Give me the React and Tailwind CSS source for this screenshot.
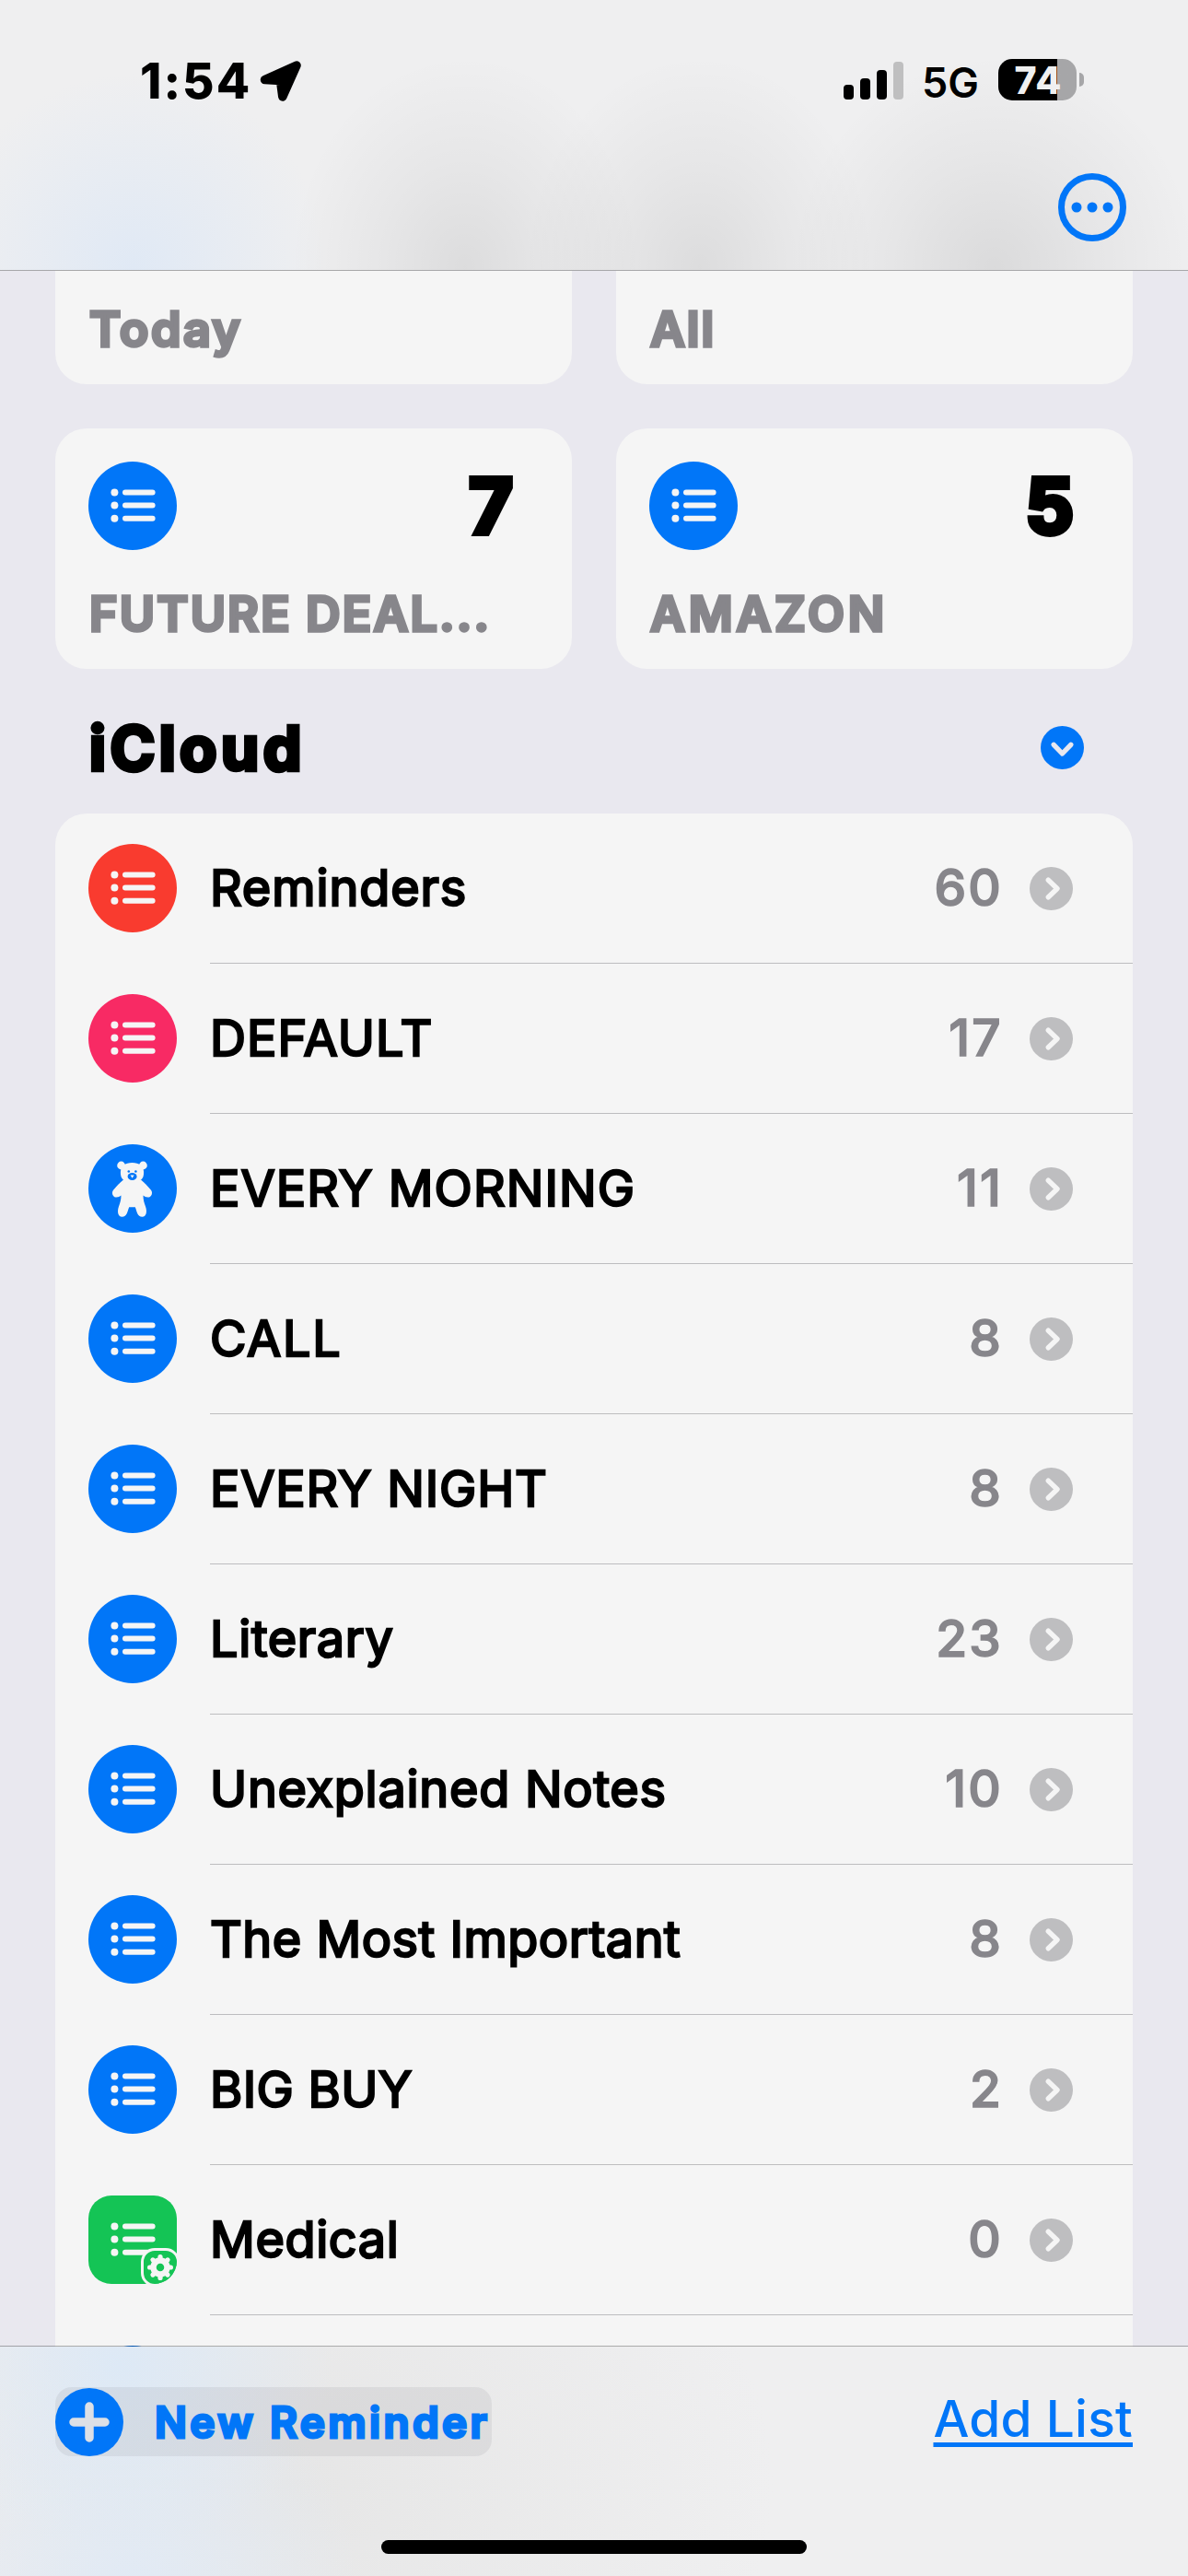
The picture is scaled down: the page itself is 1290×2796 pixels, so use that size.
import React from "react";

const lists = [
  { name: "Reminders", tracking: "tracking-[0.9px]", count: 60, icon: "list", color: "bg-[#f93b2f]" },
  { name: "DEFAULT", tracking: "tracking-[1.05px]", count: 17, icon: "list", color: "bg-[#f82a64]" },
  { name: "EVERY MORNING", tracking: "tracking-[1.05px]", count: 11, icon: "bear", color: "bg-[#0176f8]" },
  { name: "CALL", tracking: "tracking-[1.7px]", count: 8, icon: "list", color: "bg-[#0176f8]" },
  { name: "EVERY NIGHT", tracking: "tracking-[0.8px]", count: 8, icon: "list", color: "bg-[#0176f8]" },
  { name: "Literary", tracking: "tracking-[0.65px]", count: 23, icon: "list", color: "bg-[#0176f8]" },
  { name: "Unexplained Notes", tracking: "tracking-[0.74px]", count: 10, icon: "list", color: "bg-[#0176f8]" },
  { name: "The Most Important", tracking: "tracking-[0.5px]", count: 8, icon: "list", color: "bg-[#0176f8]" },
  { name: "BIG BUY", tracking: "tracking-[0.3px]", count: 2, icon: "list", color: "bg-[#0176f8]" },
  { name: "Medical", tracking: "tracking-[0.6px]", count: 0, icon: "smart", color: "" },
];

const listMarks = [33.5, 47.5, 61.7];

function ListGlyph() {
  return (
    <svg viewBox="0 0 96 96" className="size-24">
      {listMarks.map((y) => (
        <g key={y}>
          <circle cx="28.4" cy={y} r="4" fill="#f5f5f5" />
          <path d={`M40 ${y}H69.6`} stroke="#f5f5f5" strokeWidth="6" strokeLinecap="round" />
        </g>
      ))}
    </svg>
  );
}

function BearGlyph() {
  return (
    <svg viewBox="0 0 96 96" className="size-24">
      <g fill="#f5f5f5">
        <circle cx="35.6" cy="23" r="4.4" />
        <circle cx="59.4" cy="23" r="4.4" />
        <path d="M47.5 20c8 0 12.6 3.6 12.6 10.5c0 5.5-1.9 7.5-4.6 9.2H39.5c-2.7-1.7-4.6-3.7-4.6-9.2C34.9 23.6 39.5 20 47.5 20Z" />
        <path d="M38 38.5H57C61.5 42 64 45.5 67.8 49.5C70.5 52.5 68.5 57.8 64.5 57.6C62.3 57.5 61 56.5 59.5 55.5C59.5 60 60.5 63.5 62 67.5C64 73 63 78.7 58.5 78.7C53 78.7 53 74 50.8 68.3H44.2C42 74 42 78.7 36.5 78.7C32 78.7 31 73 33 67.5C34.5 63.5 35.5 60 35.5 55.5C34 56.5 32.7 57.5 30.5 57.6C26.5 57.8 24.5 52.5 27.2 49.5C31 45.5 33.5 42 38 38.5Z" />
      </g>
      <g fill="#0176f8">
        <circle cx="43.8" cy="29.5" r="1.3" />
        <circle cx="51.4" cy="29.5" r="1.3" />
        <ellipse cx="47.6" cy="35" rx="5" ry="4" />
      </g>
      <path d="M45.5 33.5H49.7L48.4 35.6L47.6 36.8L46.8 35.6Z" fill="#f5f5f5" />
    </svg>
  );
}

const teeth = [0, 45, 90, 135, 180, 225, 270, 315];

function SmartListIcon() {
  return (
    <div className="relative mt-[33px] size-24 shrink-0 self-start overflow-hidden rounded-[25px] bg-[#14c455]">
      <ListGlyph />
      <div className="absolute -right-[3px] -bottom-[3px] size-[42px] rounded-[15px] border-3 border-[#f5f5f5] bg-[#14c455]">
        <svg viewBox="0 0 36 36" className="size-9">
          <circle cx="18" cy="18" r="7.5" fill="none" stroke="#f5f5f5" strokeWidth="6.5" />
          {teeth.map((a) => (
            <path key={a} d="M18 8V6.6" transform={`rotate(${a} 18 18)`} stroke="#f5f5f5" strokeWidth="5.2" strokeLinecap="round" />
          ))}
        </svg>
      </div>
    </div>
  );
}

function RoundIcon({ icon, color }) {
  return <div className={`size-24 shrink-0 rounded-full ${color}`}>{icon === "bear" ? <BearGlyph /> : <ListGlyph />}</div>;
}

function Chevron({ down }) {
  return (
    <svg viewBox="0 0 47 47" className={down ? "size-[47px] rotate-90" : "size-[47px]"}>
      <circle cx="23.5" cy="23.5" r="23.5" fill={down ? "#0176f8" : "#bebec0"} />
      <path d="M20.3 14.2L30 23.5L20.3 32.8" fill="none" stroke={down ? "#e9e8ef" : "#f5f5f5"} strokeWidth="5.4" strokeLinecap="round" strokeLinejoin="round" />
    </svg>
  );
}

function Label({ children, tracking }) {
  return (
    <div className={`h-[60px] pl-px text-[52px] leading-[60px] font-semibold whitespace-nowrap text-[#87868b] [-webkit-text-stroke:3.5px_#87868b] [stroke-linejoin:round] ${tracking}`}>
      {children}
    </div>
  );
}

function Card({ label, count, tracking }) {
  return (
    <div className="flex h-[261px] flex-col justify-between rounded-[34px] bg-[#f5f5f5] pt-9 pb-[29px] pl-9">
      <div className="flex items-center justify-between pr-[64px]">
        <RoundIcon icon="list" color="bg-[#0176f8]" />
        <span className="pt-0.5 text-[82px] leading-[94px] font-bold [-webkit-text-stroke:6px_#000] [stroke-linejoin:round]">{count}</span>
      </div>
      <Label tracking={tracking}>{label}</Label>
    </div>
  );
}

function ScrolledCard({ label, tracking }) {
  return (
    <div className="flex h-[123px] items-end rounded-b-[34px] bg-[#f5f5f5] pb-[29px] pl-9">
      <Label tracking={tracking}>{label}</Label>
    </div>
  );
}

function StatusBar() {
  return (
    <div className="flex h-[173px] items-center justify-between pr-[113px] pl-[152px]">
      <div className="flex items-center gap-[9px] pt-[3px]">
        <span className="text-[53px] leading-[60px] font-extrabold tracking-[2px]">1:54</span>
        <svg viewBox="0 0 46 44" className="h-11 w-[46px]">
          <path d="M5.5 20.5L40 5L24.8 39L22.5 21.5Z" fill="#000" stroke="#000" strokeWidth="9.5" strokeLinejoin="round" />
        </svg>
      </div>
      <div className="flex items-center">
        <div className="flex h-[42px] items-end gap-[7px]">
          <div className="h-4 w-[11px] rounded-[4px] bg-black" />
          <div className="h-[23px] w-[11px] rounded-[4px] bg-black" />
          <div className="h-8 w-[11px] rounded-[4px] bg-black" />
          <div className="h-[41px] w-[11px] rounded-[4px] bg-[#bfbfc0]" />
        </div>
        <span className="ml-5 pt-1.5 text-[45px] leading-[50px] font-semibold">5G</span>
        <div className="ml-[21px] flex h-[45px] w-[85px] items-center justify-center rounded-[15px] bg-linear-to-r from-black from-[75%] to-[#a6a6a8] to-[75%]">
          <span className="pt-px pl-0.5 text-[41px] leading-[45px] font-extrabold tracking-[1px] text-[#f0f0f0]">74</span>
        </div>
        <div className="ml-[3px] h-[15px] w-[5px] rounded-r-full bg-[#a6a6a8]" />
      </div>
    </div>
  );
}

export default function App() {
  return (
    <div className="flex h-[2796px] w-[1290px] flex-col overflow-hidden bg-[#e9e8ef] font-['Inter',sans-serif] text-black">
      <header className="h-[294px] shrink-0 border-b border-[#a7a7a9] bg-[#efeff0] bg-[radial-gradient(210px_210px_at_145px_290px,#e0e9f5,#e0e9f580_50%,transparent),radial-gradient(190px_230px_at_505px_290px,#00000014,#00000009_50%,transparent),radial-gradient(190px_230px_at_760px_290px,#00000014,#00000009_50%,transparent),radial-gradient(220px_230px_at_1080px_290px,#00000016,#0000000a_50%,transparent)]">
        <StatusBar />
        <div className="flex h-[104px] items-center justify-end pr-[67px]">
          <svg viewBox="0 0 74 74" className="size-[74px]">
            <circle cx="37" cy="37" r="33.5" fill="none" stroke="#0176f8" strokeWidth="7" />
            <circle cx="20" cy="37" r="5.5" fill="#0176f8" />
            <circle cx="37" cy="37" r="5.5" fill="#0176f8" />
            <circle cx="54" cy="37" r="5.5" fill="#0176f8" />
          </svg>
        </div>
      </header>

      <main className="flex h-[2253px] shrink-0 flex-col overflow-hidden px-[60px]">
        <div className="grid grid-cols-2 gap-x-12">
          <ScrolledCard label="Today" tracking="tracking-[2.5px]" />
          <ScrolledCard label="All" tracking="tracking-[2px]" />
        </div>
        <div className="mt-12 grid grid-cols-2 gap-x-12">
          <Card label="FUTURE DEAL..." count={7} tracking="tracking-[2.16px]" />
          <Card label="AMAZON" count={5} tracking="tracking-[3.8px]" />
        </div>
        <div className="flex h-[157px] shrink-0 items-center justify-between pt-3.5 pr-[53px] pl-9">
          <h2 className="pl-px text-[66px] leading-[80px] font-bold tracking-[4.5px] [-webkit-text-stroke:4.5px_#000] [stroke-linejoin:round]">iCloud</h2>
          <Chevron down />
        </div>
        <ul className="rounded-t-[34px] bg-[#f5f5f5] pl-9">
          {lists.map((l) => (
            <li key={l.name} className="flex h-[163px] items-center">
              {l.icon === "smart" ? (
                <SmartListIcon />
              ) : (
                <div className="h-full pt-[33px]">
                  <RoundIcon icon={l.icon} color={l.color} />
                </div>
              )}
              <div className="ml-9 flex h-full grow items-center border-b border-[#bdbdbf] pr-[65px]">
                <span className={`grow text-[54px] leading-[64px] whitespace-nowrap [-webkit-text-stroke:2.4px_#000] [stroke-linejoin:round] ${l.tracking}`}>{l.name}</span>
                <span className="pb-0.5 text-[55px] leading-[64px] font-medium tracking-[2.2px] text-[#87868b] [-webkit-text-stroke:1.5px_#87868b] [stroke-linejoin:round]">{l.count}</span>
                <div className="ml-[29px] pt-px"><Chevron /></div>
              </div>
            </li>
          ))}
          <li className="h-[163px] pt-[33px]">
            <RoundIcon icon="list" color="bg-[#0176f8]" />
          </li>
        </ul>
      </main>

      <footer className="z-10 -mt-px flex h-[250px] shrink-0 flex-col border-t border-black/30 bg-[#efeff0] bg-[radial-gradient(230px_200px_at_130px_20px,#dde9f6,#dde9f680_50%,transparent),radial-gradient(250px_240px_at_140px_260px,#e1eaf5,#e1eaf580_50%,transparent),radial-gradient(520px_400px_at_320px_150px,#e6e6e6,#e6e6e680_50%,transparent)] bg-clip-padding">
        <div className="flex items-start justify-between px-[60px] pt-[44px]">
          <button className="flex h-[75px] w-[474px] items-center rounded-[18px] bg-[#7878801f]">
            <svg viewBox="0 0 74 74" className="size-[74px] shrink-0">
              <circle cx="37" cy="37" r="37" fill="#0176f8" />
              <path d="M37 20V54M20 37H54" stroke="#dde0e6" strokeWidth="9.5" strokeLinecap="round" />
            </svg>
            <span className="ml-[34px] text-[46px] leading-[60px] font-semibold tracking-[3.35px] whitespace-nowrap text-[#0176f8] [-webkit-text-stroke:3px_#0176f8] [stroke-linejoin:round]">New Reminder</span>
          </button>
          <a className="text-[55px] leading-[69px] font-medium tracking-[0.25px] text-[#0176f8] underline decoration-[5px] underline-offset-[6px]">Add List</a>
        </div>
        <div className="mt-[91px] h-[15px] w-[462px] self-center rounded-full bg-black" />
      </footer>
    </div>
  );
}
